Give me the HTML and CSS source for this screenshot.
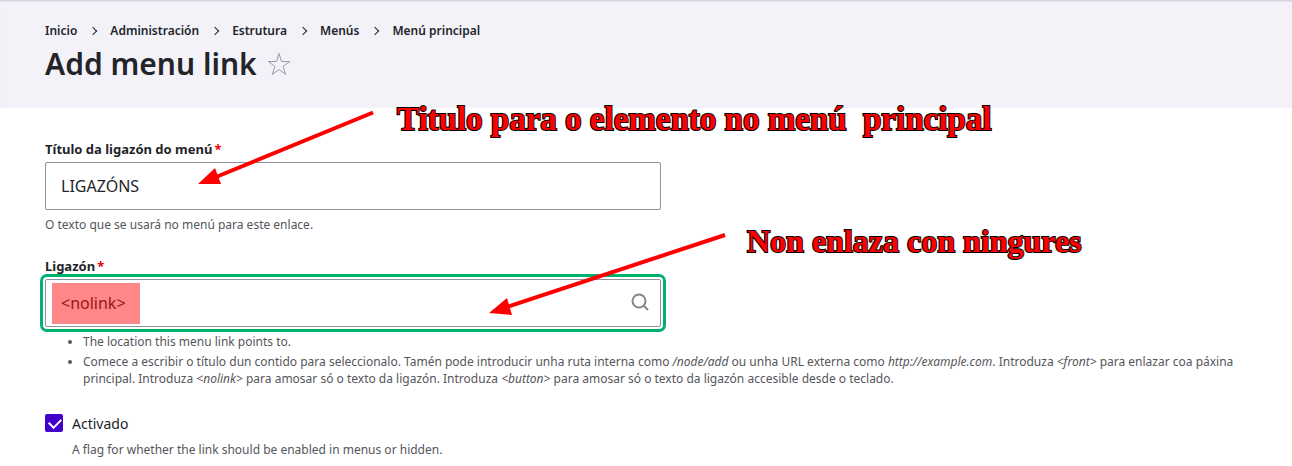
FILE: index.html
```html
<!DOCTYPE html>
<html lang="gl">
<head>
    <meta charset="UTF-8">
    <meta name="viewport" content="width=device-width, initial-scale=1.0">
    <title>Add menu link</title>
    <link rel="stylesheet" href="styles.css">
</head>
<body>
    <header class="page-header">
        <nav aria-label="Breadcrumb">
            <ol class="breadcrumb">
                <li><a href="#">Inicio</a></li>
                <li><a href="#">Administración</a></li>
                <li><a href="#">Estrutura</a></li>
                <li><a href="#">Menús</a></li>
                <li><a href="#">Menú principal</a></li>
            </ol>
        </nav>
        <div class="title-row">
            <h1>Add menu link</h1>
            <button type="button" class="star" aria-label="Favorite">
                <svg width="24" height="24" viewBox="0 0 24 24" fill="none" stroke="#9a9ba8">
                    <path d="M12 1.500l2.500 8h8.300l-6.700 4.900 2.600 8L12 17.500l-6.700 4.900 2.600-8-6.700-4.900h8.300z"/>
                </svg>
            </button>
        </div>
    </header>

    <main>
        <form>
            <div class="form-item">
                <label class="form-label" for="title">Título da ligazón do menú<span class="required">*</span></label>
                <input type="text" id="title" class="form-text" value="LIGAZÓNS">
                <div class="description">O texto que se usará no menú para este enlace.</div>
            </div>

            <div class="form-item">
                <label class="form-label" for="link">Ligazón<span class="required">*</span></label>
                <div class="autocomplete">
                    <input type="text" id="link" class="form-text focused" value="&lt;nolink&gt;">
                    <span class="highlight"></span>
                    <svg class="search-icon" width="18" height="18" viewBox="0 0 18 18" fill="none" stroke="#868686" stroke-width="2">
                        <circle cx="8" cy="8" r="6.500"/>
                        <path d="M12.500 12.500l4.500 4.500"/>
                    </svg>
                </div>
                <ul class="description">
                    <li>The location this menu link points to.</li>
                    <li>Comece a escribir o título dun contido para seleccionalo. Tamén pode introducir unha ruta interna como <em>/node/add</em> ou unha URL externa como <em>http://example.com</em>. Introduza <em>&lt;front&gt;</em> para enlazar coa páxina principal. Introduza <em>&lt;nolink&gt;</em> para amosar só o texto da ligazón. Introduza <em>&lt;button&gt;</em> para amosar só o texto da ligazón accesible desde o teclado.</li>
                </ul>
            </div>

            <div class="form-check">
                <input type="checkbox" id="enabled" checked>
                <label for="enabled">Activado</label>
                <div class="description">A flag for whether the link should be enabled in menus or hidden.</div>
            </div>
        </form>
    </main>

    <!-- Annotations over the form -->
    <svg class="arrows" width="740" height="330" viewBox="0 0 740 330" fill="#f00" stroke="#f00">
        <path d="M373 112.500L216 177M725 235L508 306.500" stroke-width="4"/>
        <path d="M198 184l17-16 6 16zM489 313l18-15 5 17z" stroke="none"/>
    </svg>
    <p class="note note-title">Titulo para o elemento no menú&nbsp; principal</p>
    <p class="note note-link">Non enlaza con ningures</p>
</body>
</html>
```
FILE: styles.css
```css
* {
    box-sizing: border-box;
}
body {
    position: relative;
    margin: 0;
    font-family: "Noto Sans", sans-serif;
    font-size: 14px;
    line-height: 18px;
    color: #232429;
    background-color: #fff;
}
.page-header {
    padding: 21px 45px 24px;
    background-color: #f3f2f9;
    border-top: 1px solid #d3d3db;
    box-shadow: inset 0 1px 1px #e4e3ea;
}
.breadcrumb {
    display: flex;
    margin: 0;
    padding: 0;
    list-style: none;
    font-size: 12px;
    font-weight: 600;
}
.breadcrumb li {
    display: flex;
    align-items: center;
}
.breadcrumb li + li::before {
    content: "";
    width: 5px;
    height: 5px;
    margin: 0 14px 0 13px;
    border: solid #232429;
    border-width: 1px 1px 0 0;
    transform: rotate(45deg);
}
.breadcrumb a {
    color: inherit;
    text-decoration: none;
}
.title-row {
    display: flex;
    align-items: center;
    gap: 10px;
    margin-top: 4px;
}
h1 {
    margin: 0;
    font-size: 30px;
    font-weight: 600;
    line-height: 40px;
}
.star {
    display: flex;
    padding: 0;
    background: none;
    border: none;
    cursor: pointer;
}
main {
    padding: 32px 45px 8px;
}
.form-item {
    margin-bottom: 24px;
}
.form-label {
    display: block;
    margin-bottom: 4px;
    font-weight: 700;
    font-size: 13px;
}
.required {
    margin-left: 2px;
    color: #e00;
}
.form-text {
    display: block;
    width: 100%;
    max-width: 616px;
    height: 48px;
    padding: 0 15px;
    font-family: inherit;
    font-size: 16px;
    color: #232429;
    background-color: #fff;
    border: 1px solid #8e929c;
    border-radius: 2px;
}
.focused {
    outline: 3px solid #00b26b;
    outline-offset: 2px;
}
.description {
    margin: 6px 0 0;
    font-size: 12px;
    line-height: 17px;
    color: #55565b;
}
.autocomplete {
    position: relative;
    max-width: 616px;
}
.highlight {
    position: absolute;
    top: 4px;
    left: 7px;
    width: 88px;
    height: 41px;
    background-color: rgba(255, 16, 16, 0.5);
}
.search-icon {
    position: absolute;
    top: 14px;
    right: 12px;
}
ul.description {
    padding-left: 38px;
}
ul.description li + li {
    margin-top: 3px;
}
.form-check {
    display: grid;
    grid-template-columns: 18px 1fr;
    column-gap: 9px;
    margin-top: 27px;
}
.form-check label {
    line-height: 20px;
}
.form-check input {
    appearance: none;
    width: 18px;
    height: 18px;
    margin: 0;
    background-color: #4300cc;
    border-radius: 2px;
}
.form-check input:checked::before {
    content: "";
    display: block;
    width: 10px;
    height: 6px;
    margin: 5px 4px;
    border: solid #fff;
    border-width: 0 0 2px 2px;
    transform: translateY(-1px) rotate(-45deg);
}
.form-check .description {
    grid-column: 2;
    margin-top: 7px;
}
.arrows {
    position: absolute;
    top: 0;
    left: 0;
    pointer-events: none;
}
.note {
    position: absolute;
    margin: 0;
    font-family: "Liberation Serif", serif;
    font-weight: 700;
    line-height: 38px;
    white-space: nowrap;
    color: #f00;
    -webkit-text-stroke: 2px #000;
    paint-order: stroke fill;
}
.note-title {
    top: 100px;
    left: 397px;
    font-size: 33px;
}
.note-link {
    top: 222px;
    left: 747px;
    font-size: 32px;
}
```
